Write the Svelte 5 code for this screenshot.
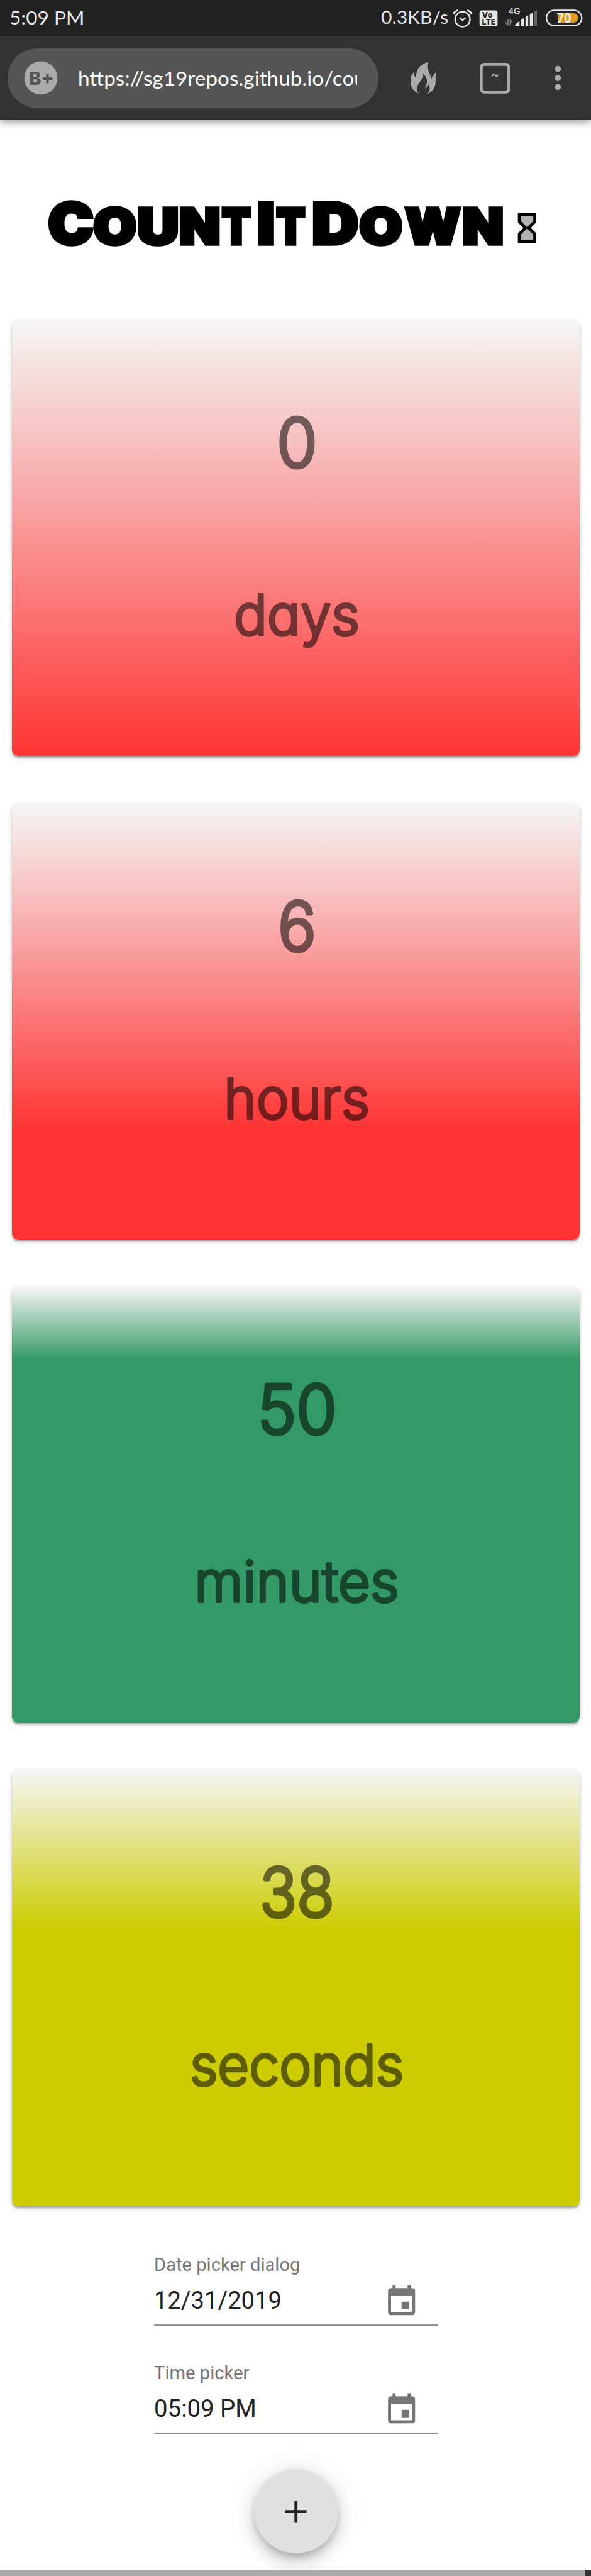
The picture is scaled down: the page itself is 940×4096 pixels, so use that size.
<script>
  const logo = [
    { ch: 'C', x: 88, w: 83, big: true },
    { ch: 'O', x: 170.5, w: 78.5 },
    { ch: 'U', x: 250.5, w: 76 },
    { ch: 'N', x: 327.5, w: 75 },
    { ch: 'T', x: 405.5, w: 52.5 },
    { ch: 'I', x: 470.5, w: 32, big: true },
    { ch: 'T', x: 505, w: 52.5 },
    { ch: 'D', x: 570, w: 85, big: true },
    { ch: 'O', x: 656.5, w: 78.5 },
    { ch: 'W', x: 740.5, w: 101 },
    { ch: 'N', x: 845, w: 75 }
  ];
  const cards = [
    { value: '0', unit: 'days', color: '#ff3333', stop: 100, vw: 74, uw: 230 },
    { value: '6', unit: 'hours', color: '#ff3333', stop: 75, vw: 70, uw: 266 },
    { value: '50', unit: 'minutes', color: '#339966', stop: 16.67, vw: 145, uw: 374 },
    { value: '38', unit: 'seconds', color: '#cccc00', stop: 36.67, vw: 136, uw: 391 }
  ];
  const fields = [
    { label: 'Date picker dialog', value: '12/31/2019', lw: 267, vw: 233 },
    { label: 'Time picker', value: '05:09 PM', lw: 174, vw: 187 }
  ];
</script>

<div class="page">
  <header>
    <div class="status">
      <svg class="clock" width="140" height="66"><text x="0" y="44.5" textLength="137" lengthAdjust="spacingAndGlyphs">5:09 PM</text></svg>
      <svg class="indicators" width="384" height="66" viewBox="696 0 384 66">
        <text x="696" y="44" textLength="123" lengthAdjust="spacingAndGlyphs">0.3KB/s</text>
        <g fill="none" stroke="#e8e8e8" stroke-width="2.8">
          <circle cx="845" cy="35.2" r="13.6" />
          <path d="M828 25.5Q831 21 836.5 18.5M862 25.5Q859 21 853.5 18.5" stroke-width="3.2" />
          <path d="M839.5 32.3 845 37 850.5 32.3" />
        </g>
        <rect x="876" y="19" width="33" height="29" rx="4.5" fill="#e8e8e8" />
        <g class="tiny">
          <text x="880.5" y="31.8" font-size="13" textLength="19" lengthAdjust="spacingAndGlyphs">Vo</text>
          <text x="880.5" y="44.8" font-size="13.5" textLength="25" lengthAdjust="spacingAndGlyphs">LTE</text>
        </g>
        <text class="net" x="928.5" y="26" textLength="22" lengthAdjust="spacingAndGlyphs">4G</text>
        <path d="M928 35v12M928.5 46.5 923.5 41M932 47V35M931.5 35.5 936 41" fill="none" stroke="#777" stroke-width="2" />
        <path d="M941 47v-2l7-6h1v8zM952 47V36l5-3v14zM960 47V31l5-3v19zM968 47V26l5-3v24z" fill="#e8e8e8" />
        <path d="M976 47V21l5-3v29z" fill="#666" />
        <rect x="998.3" y="18.8" width="64.5" height="28" rx="14" fill="none" stroke="#e8e8e8" stroke-width="2.6" />
        <path d="M1019 24h30a9 9 0 0 1 0 17.5h-30z" fill="#e09a22" />
        <text class="batt" x="1017.5" y="40.8" textLength="26" lengthAdjust="spacingAndGlyphs">70</text>
      </svg>
    </div>
    <div class="toolbar">
      <div class="address">
        <svg width="62" height="62"><circle cx="31" cy="31" r="30.3" fill="#aaa" /><text class="badge" x="9.5" y="43.7" textLength="45" lengthAdjust="spacingAndGlyphs">B+</text></svg>
        <svg class="url" width="511" height="110"><text x="0" y="67.5" textLength="526" lengthAdjust="spacingAndGlyphs">https://sg19repos.github.io/cou</text></svg>
      </div>
      <svg class="flame" width="46.5" height="58" viewBox="610 342 135 174" preserveAspectRatio="none">
        <path fill="#aaa" d="M702 342C697 362 698 375 706 392C716 412 719 425 719 444C722 425 730 408 745 397C741 415 744 425 743 447C742 485 722 508 694 516C706 508 712 498 712 486C712 474 708 466 701 459C701 472 696 482 685 485C694 470 699 455 696 436C693 422 684 412 677 405C676 425 669 437 658 452C648 466 642 475 643 490C644 502 650 509 659 514C628 505 610 480 610 446C610 425 617 411 626 397C627 410 631 420 639 427C640 400 644 384 657 368C670 353 685 345 702 342Z" />
      </svg>
      <svg class="tab" width="56" height="56"><rect x="2.7" y="2.7" width="50.6" height="50.6" rx="5.5" fill="none" stroke="#aaa" stroke-width="5.4" /><text x="28" y="29" text-anchor="middle">~</text></svg>
      <svg class="dots" width="12" height="46" fill="#aaa"><circle cx="6" cy="6.5" r="5.6" /><circle cx="6" cy="23" r="5.6" /><circle cx="6" cy="39.5" r="5.6" /></svg>
    </div>
  </header>

  <h1>
    <svg width="1080" height="365" viewBox="0 220 1080 365">
      {#each logo as l}
        <text class="logo" class:big={l.big} x={l.x} y="446" textLength={l.w} lengthAdjust="spacingAndGlyphs">{l.ch}</text>
      {/each}
      <path d="M949 391.8H977.2V405.5L966 416.7 977.2 428V442H949V428L960.2 416.7 949 405.5Z" fill="#b2b2b2" stroke="#000" stroke-width="5.5" />
    </svg>
  </h1>

  <main>
    {#each cards as c}
      <section class="card" style="background-image: linear-gradient(to bottom, #f5f5f5 0%, {c.color} {c.stop}%)">
        <svg class="value" width="1037" height="300"><text x="521" y="268" text-anchor="middle" textLength={c.vw} lengthAdjust="spacingAndGlyphs">{c.value}</text></svg>
        <svg class="unit" width="1037" height="330"><text x="520.5" y="274" text-anchor="middle" textLength={c.uw} lengthAdjust="spacingAndGlyphs">{c.unit}</text></svg>
      </section>
    {/each}
  </main>

  <form>
    {#each fields as f}
      <div class="field">
        <svg class="label" width="300" height="40"><text x="0" y="31" textLength={f.lw} lengthAdjust="spacingAndGlyphs">{f.label}</text></svg>
        <div class="row">
          <svg class="input" width="300" height="66"><text x="0" y="46" textLength={f.vw} lengthAdjust="spacingAndGlyphs">{f.value}</text></svg>
          <svg width="66" height="66" viewBox="0 0 24 24" fill="#757575"><path d="M17 12h-5v5h5v-5zM16 1v2H8V1H6v2H5c-1.11 0-1.99.9-1.99 2L3 19c0 1.1.89 2 2 2h14c1.1 0 2-.9 2-2V5c0-1.1-.9-2-2-2h-1V1h-2zm3 18H5V8h14v11z" /></svg>
        </div>
      </div>
    {/each}
    <button type="button" aria-label="Add"><svg width="66" height="66" viewBox="0 0 24 24" fill="#212121"><path d="M19 13h-6v6h-2v-6H5v-2h6V5h2v6h6v2z" /></svg></button>
  </form>
  <footer><div></div></footer>
</div>

<style>
  :global(body) { background: #fff; overflow: hidden; }
  .page { zoom: 0.8705; width: 1080px; height: 4705.5px; display: flex; flex-direction: column; overflow: hidden; background: #fff; font-family: Lato, sans-serif; }
  svg { display: block; flex: none; }
  header { flex: none; box-shadow: 0 3px 14px rgba(0, 0, 0, 0.45); }
  .status { height: 66px; background: #222; display: flex; justify-content: space-between; padding-left: 17px; fill: #e8e8e8; font-size: 34px; }
  .tiny { fill: #222; font-family: Inter, sans-serif; font-weight: 800; }
  .net { font: 500 17px Inter, sans-serif; }
  .batt { font: 700 23.5px Roboto, sans-serif; fill: #fff5dc; }
  .toolbar { height: 154px; background: #333; display: flex; align-items: center; padding-left: 14px; }
  .address { width: 678px; height: 110px; border-radius: 55px; background: #555; display: flex; align-items: center; padding-left: 30px; box-sizing: border-box; flex: none; }
  .badge { font: 800 33.5px Inter, sans-serif; fill: #555; }
  .url { margin-left: 36px; fill: #fff; font-size: 34.5px; overflow: hidden; }
  .flame { margin-left: 58px; }
  .tab { margin-left: 79.5px; fill: #aaa; font: 500 24px Inter, sans-serif; }
  .dots { margin-left: 81px; }
  h1 { margin: 0; height: 366px; flex: none; }
  .logo { font: 900 90px Inter, sans-serif; stroke: #000; stroke-width: 6.5; }
  .logo.big { font-size: 104px; }
  main { display: flex; flex-direction: column; gap: 87.8px; padding: 0 21px 0 22px; flex: none; }
  .card { height: 795px; border-radius: 11px; box-shadow: 0 2.75px 8.25px rgba(0, 0, 0, 0.2), 0 2.75px 2.75px rgba(0, 0, 0, 0.14), 0 5.5px 2.75px -2.75px rgba(0, 0, 0, 0.12); }
  .value, .unit { opacity: 0.54; font-family: Inter, sans-serif; font-weight: 300; font-feature-settings: 'cv11'; stroke: #000; stroke-width: 6; stroke-linejoin: round; }
  .value { font-size: 124px; }
  .unit { font-size: 103px; stroke-width: 4.8; }
  form { flex: none; margin-top: 88px; display: flex; flex-direction: column; font-family: Roboto, sans-serif; }
  .field { width: 519px; margin: 0 0 67px 281px; border-bottom: 3px solid #949494; padding-bottom: 8px; box-sizing: border-box; height: 131px; }
  .label { fill: #757575; font-size: 33px; }
  .row { display: flex; justify-content: space-between; margin-top: 14px; padding-right: 33px; }
  .input { fill: #212121; font-size: 44px; }
  button { width: 154px; height: 154px; margin: -3px 0 0 464px; padding: 0; border: 0; border-radius: 50%; background: #e0e0e0; display: flex; align-items: center; justify-content: center; box-shadow: 0 8px 14px -3px rgba(0, 0, 0, 0.2), 0 16.5px 27.5px rgba(0, 0, 0, 0.14), 0 3px 50px rgba(0, 0, 0, 0.12); }
  footer { position: relative; margin-top: auto; height: 11.5px; background: #333; flex: none; }
  footer div { width: 1069px; height: 12px; background: #aaa; }
</style>
